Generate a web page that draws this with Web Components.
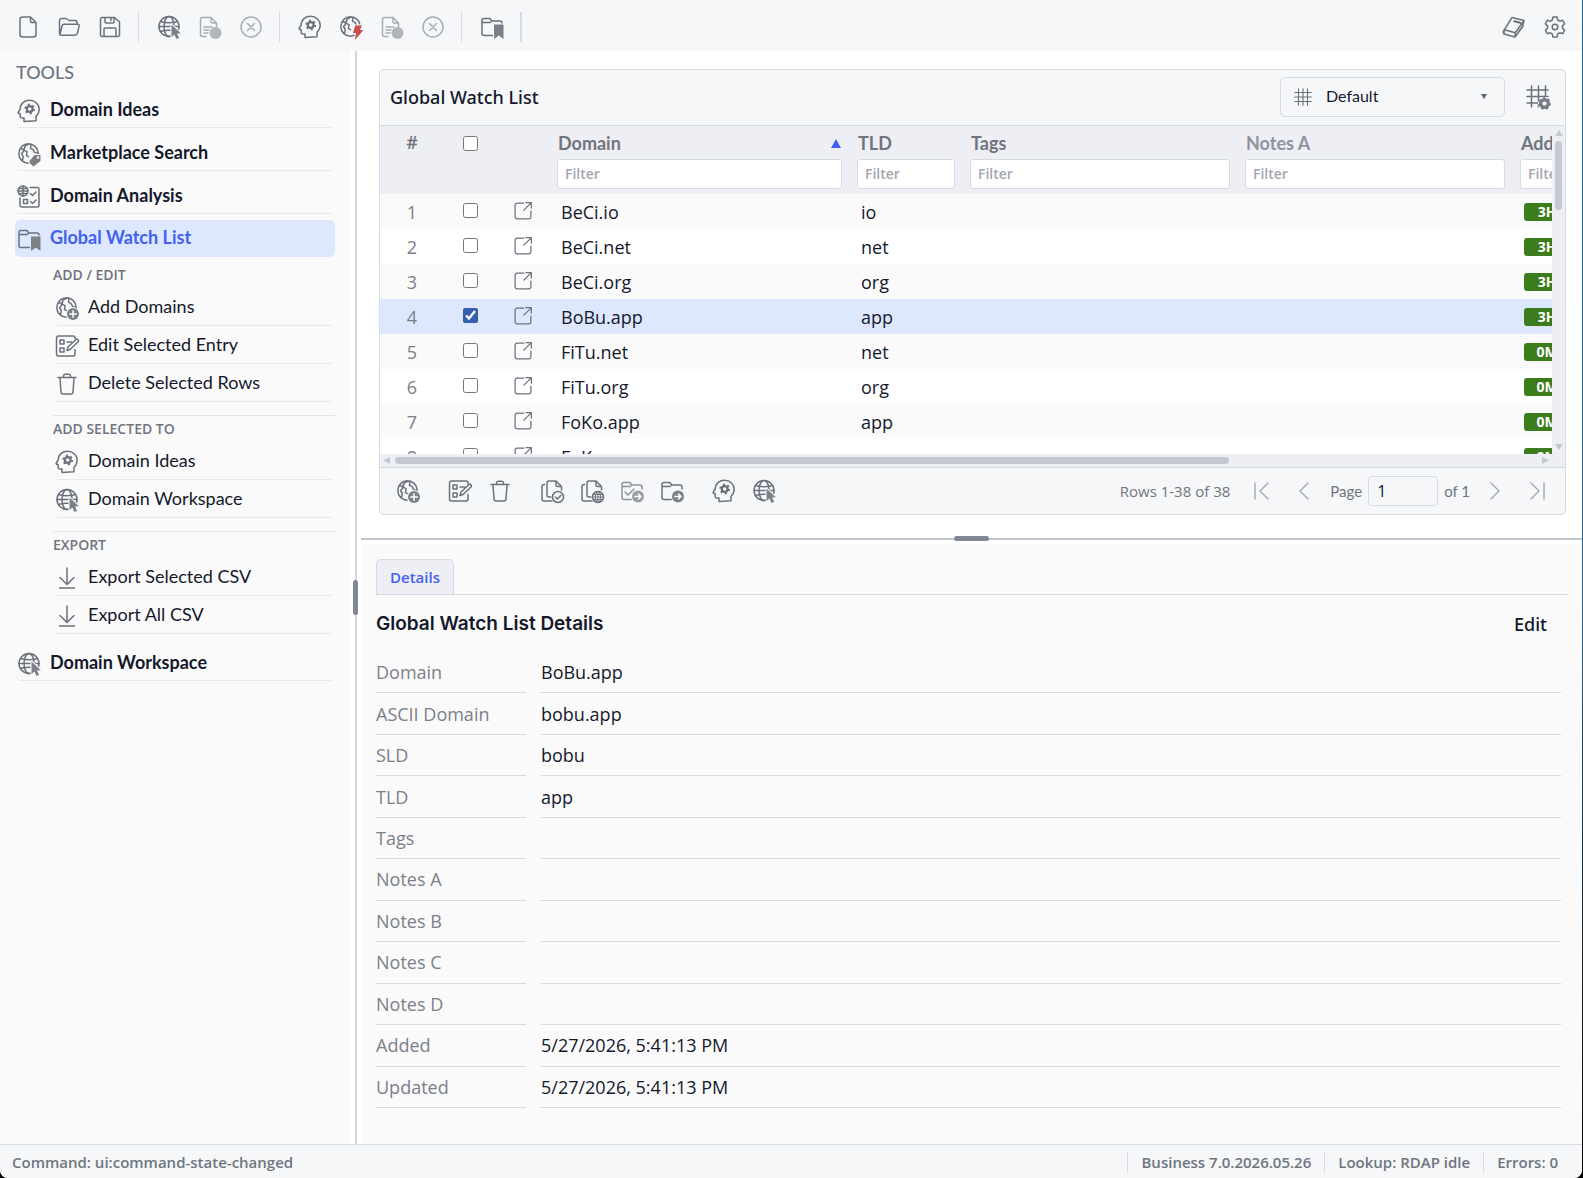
<!DOCTYPE html>
<html lang="en">
<head>
<meta charset="utf-8">
<title>Global Watch List</title>
<style>
  html, body { height: 100%; margin: 0; }
  body {
    background: linear-gradient(#1f5f8c, #2f5d80 50%, #111 90%, #000);
    --body-font: "Open Sans", "Noto Sans", sans-serif;
    --title-font: "Noto Sans", "Open Sans", sans-serif;
    --head-font: Lato, "Open Sans", sans-serif;
    font-family: var(--body-font);
    font-size: 18px;
    color: #14182b;
    --bar: #f5f7f9;
    --pane: #fafafa;
    --line: #d6dae3;
    --muted: #6f757f;
    --accent: #4361ee;
    --selected: #dde8fe;
    --icon-bg: #f5f7f9;
  }
</style>
</head>
<body>
<app-shell></app-shell>

<script>
const ICONS = {
  file: '<path d="M14.5 2h-8A2.5 2.5 0 0 0 4 4.500v15A2.500 2.500 0 0 0 6.500 22h11a2.500 2.500 0 0 0 2.500-2.500V7.500zM14.500 2v4A1.500 1.500 0 0 0 16 7.500h4"/>',
  open: '<path d="M2.500 18.500v-13A2 2 0 0 1 4.500 3.500h4.500l3 2h6a2 2 0 0 1 2 2v1.500M3 19.500l2-8.500a2 2 0 0 1 2-1.800h14a1.200 1.200 0 0 1 1.200 1.500l-1.700 7.500a2.500 2.500 0 0 1-2.300 2H4.500a2 2 0 0 1-2-2"/>',
  save: '<path d="M5 2.500h11.500L21.500 7v12.500a2 2 0 0 1-2 2h-15a2 2 0 0 1-2-2v-15a2 2 0 0 1 2-2M7 2.500v4.500a1 1 0 0 0 1 1h7a1 1 0 0 0 1-1V2.500M13 3v2.500M6 21.500V14a1 1 0 0 1 1-1h10a1 1 0 0 1 1 1v7.500"/>',
  globe: '<circle cx="12" cy="11.500" r="10"/><ellipse cx="12" cy="11.500" rx="5" ry="10"/><path d="M3.500 6.500q8.500 2.500 17 0M2 11.500h20M3.500 16.500q8.500-2.500 17 0"/><path class="solid cut" d="M14.500 9.500v12.500l2.900-2.400 2.100 4.400 2.600-1.200-2.100-4.200 3.800-.4z"/>',
  log: '<path d="M8 21.500H4.500A2 2 0 0 1 2.500 19.500v-15a2 2 0 0 1 2-2h8.500l5.500 5.500v4M13 2.500v4A1.500 1.500 0 0 0 14.500 8h4M6 12h8M6 15h5M6 18h4"/><circle class="solid" cx="17.500" cy="18" r="6"/>',
  cancel: '<circle cx="12" cy="12" r="10"/><path d="M8.500 8.500l7 7M15.500 8.500l-7 7"/>',
  head: '<path d="M7 22.500v-3.500H4.800a1.600 1.600 0 0 1-1.600-1.600V15L1.300 14q-.4-.5 0-1L3.200 10C3.200 4.500 7.500 1.300 12.700 1.300c5.500 0 9.500 4 9.500 9 0 3-1.200 5-3.200 7v4.500z"/><circle cx="12.700" cy="10" r="2.900" style="stroke-width:2.200"/><circle class="teeth" cx="12.700" cy="10" r="4.400"/>',
  bolt: '<circle cx="11.500" cy="11.500" r="9.700"/><path d="M3.500 7h2.700l.3 2.500-2 2L6 14v3l-1.500.8M12 2L8 4.200l-1 4 3 1.500-.5 4 2 1M14 2.400l-.5 4 2.500 1 1.500 3 3.500 1"/><path class="cut" fill="#c84f4f" d="M16.200 10.500h6.800l-2 4.500h3.500L16 25l1-7h-3z"/>',
  folder: '<path d="M13 20.500H4a2 2 0 0 1-2-2v-13A1.800 1.800 0 0 1 3.800 3.500h6l2 2.500H20a2 2 0 0 1 2 2v2M2.500 7.500h7.500L12 6"/>',
  book: '<path d="M10 2.500l12 3-1.500 6-7.500 10.500L2 19l.3-4.200zM2.300 14.800l11 3L22 5.500M13.300 17.800L13 22M2 19q-1.500-2 .3-4.200M15 19.200l6-8"/><path style="stroke-width:2.200" d="M12.300 6.300l6 1.500"/>',
  gear: '<path d="M10 2h4l.7 3 2 1.200 3-.9 2 3.500-2.300 2.100v2.200l2.300 2.100-2 3.500-3-.9-2 1.200-.7 3h-4l-.7-3-2-1.200-3 .9-2-3.500 2.300-2.100v-2.200L2.300 8.800l2-3.500 3 .9 2-1.200z"/><circle cx="12" cy="12" r="2.800"/>',
  tag: '<circle cx="11.500" cy="11.500" r="9.700"/><path d="M3.500 7h2.700l.3 2.500-2 2L6 14v3l-1.500.8M12 2L8 4.200l-1 4 3 1.500-.5 4 2 1M14 2.400l-.5 4 2.500 1 1.500 3 3.500 1"/><path class="solid cut" d="M12.500 19l5-6h6v6l-7 5.500-4-3.500z"/><circle cx="21" cy="15.500" r=".5" stroke="#fff"/>',
  analysis: '<circle cx="6" cy="6" r="5"/><path d="M1 6h10M6 1v10M2 3.500h8M2 8.500h8M13 2.500h7a2 2 0 0 1 2 2v15.500a2 2 0 0 1-2 2H5a2 2 0 0 1-2-2v-7M6.500 14.500h4v4h-4zM13.500 8.500l2 2L19 7M13.500 16.500l2 2L19 15"/>',
  add: '<circle cx="11.500" cy="11.500" r="9.700"/><path d="M3.500 7h2.700l.3 2.500-2 2L6 14v3l-1.500.8M12 2L8 4.200l-1 4 3 1.500-.5 4 2 1M14 2.400l-.5 4 2.500 1 1.500 3 3.500 1"/><circle class="solid cut" cx="18" cy="18" r="6"/><path stroke="#fff" d="M18 14.700v6.600M14.700 18h6.600"/>',
  edit: '<path d="M20 4.500V4a2 2 0 0 0-2-2H3.500a2 2 0 0 0-2 2v16a2 2 0 0 0 2 2H18a2 2 0 0 0 2-2v-4.500M5 6h4v4H5zM5 14h4v4H5zM12 8h4.500M12 16.500l1-3.500 8-7.500q1-.8 2 .2t.2 2L15 15.500z"/>',
  trash: '<path d="M3 5.500h18M8.500 5.500V4A1.800 1.800 0 0 1 10.300 2.200h3.400A1.800 1.800 0 0 1 15.500 4v1.500M5 6l1 14a2.200 2.200 0 0 0 2.200 2h7.600A2.200 2.200 0 0 0 18 20L19 6"/>',
  download: '<path d="M12 2v16M5 11.500l7 7 7-7M4.500 22h15"/>',
  grid: '<path d="M6 1v22M12 1v22M18 1v22M1 6h22M1 12h22M1 18h22"/>',
  columns: '<path d="M5.500 1v21M12.500 1v21M19.500 1v11M1 5h21M1 11.500h21M1 18h12"/><circle class="solid cut" cx="18.500" cy="18.500" r="5.500"/><circle cx="18.500" cy="18.500" r="3.300" stroke="#7c8087" style="stroke-width:2.400" fill="#f5f7f9"/><circle class="teeth" cx="18.500" cy="18.500" r="5.300"/>',
  external: '<path d="M13 2.500H5A2.500 2.500 0 0 0 2.500 5v14A2.500 2.500 0 0 0 5 21.500h14a2.500 2.500 0 0 0 2.500-2.500v-7M15.500 2h6.500v6.500M21.500 2.500L13 11"/>',
  copy: '<path d="M9 2h7l5.500 5.500V11M16 2v4a1.500 1.500 0 0 0 1.500 1.500h4M11 18H9A2 2 0 0 1 7 16V4a2 2 0 0 1 2-2M4.500 5.500A2 2 0 0 0 2 7.500V20a2 2 0 0 0 2 2h8"/><circle cx="18" cy="18" r="5.500"/>',
  first: '<path d="M5 4v16M18 4l-8 8 8 8"/>',
  prev: '<path d="M16 4l-8 8 8 8"/>',
  next: '<path d="M8 4l8 8-8 8"/>',
  last: '<path d="M19 4v16M6 4l8 8-8 8"/>'
};
ICONS.watch = ICONS.folder + '<path class="solid cut" d="M14 9.500h9.500V24l-4.700-3.500L14 24z"/>';
ICONS.move = ICONS.folder + '<circle class="solid cut" cx="18" cy="17.500" r="6"/><path stroke="#fff" d="M14.800 17.500h6M18.500 15l2.500 2.500-2.500 2.500"/>';
ICONS.moveChecked = '<path d="M5 13l3 3 6-6"/>' + ICONS.move;
ICONS.copyCheck = ICONS.copy + '<path d="M15.500 18l2 2 3.300-3.600"/>';
ICONS.copyGlobe = ICONS.copy + '<path style="stroke-width:1" d="M18 12.500v11M12.500 18h11M13.500 15.500h9M13.500 20.500h9"/><ellipse style="stroke-width:1" cx="18" cy="18" rx="2.600" ry="5.500"/>';

class UiIcon extends HTMLElement {
  connectedCallback() {
    this.attachShadow({ mode: 'open' });
    this.shadowRoot.innerHTML = `
      <style>
        :host { display: inline-flex; width: 24px; height: 24px; flex: none; color: #6b717c; }
        svg { width: 100%; height: 100%; fill: none; stroke: currentColor; stroke-width: 1.5;
          stroke-linecap: round; stroke-linejoin: round; overflow: visible; }
        .solid { fill: #7c8087; stroke: none; }
        .cut { stroke: var(--icon-bg); stroke-width: 2; paint-order: stroke; }
        .teeth { stroke-linecap: butt; stroke-width: 2; stroke-dasharray: 2 2.600; }
      </style>
      <svg viewBox="0 0 24 24" aria-hidden="true">${ICONS[this.getAttribute('name')]}</svg>
    `;
  }
}
customElements.define('ui-icon', UiIcon);

class IconButton extends HTMLElement {
  connectedCallback() {
    const off = this.hasAttribute('disabled');
    this.attachShadow({ mode: 'open' });
    this.shadowRoot.innerHTML = `
      <style>
        :host { display: inline-flex; }
        :host([disabled]) { opacity: .55; }
        button { display: flex; align-items: center; justify-content: center;
          width: var(--btn, 41px); height: 40px; padding: 0; border: 0; background: none; }
      </style>
      <button type="button" aria-label="${this.getAttribute('label')}" ${off ? 'disabled' : ''}>
        <ui-icon name="${this.getAttribute('icon')}"></ui-icon>
      </button>
    `;
  }
}
customElements.define('icon-button', IconButton);

class AppToolbar extends HTMLElement {
  connectedCallback() {
    this.attachShadow({ mode: 'open' });
    this.shadowRoot.innerHTML = `
      <style>
        :host { display: flex; align-items: center; height: 51px; padding: 2px 7px 0; box-sizing: border-box; background: var(--bar); }
        i { width: 1px; height: 30px; margin: 0 9px 0 8px; background: var(--line); }
        i.wide { width: 2px; }
        .space { flex: 1; }
      </style>
      <icon-button icon="file" label="New"></icon-button>
      <icon-button icon="open" label="Open"></icon-button>
      <icon-button icon="save" label="Save"></icon-button>
      <i></i>
      <icon-button icon="globe" label="Workspace"></icon-button>
      <icon-button icon="log" label="Lookup log" disabled></icon-button>
      <icon-button icon="cancel" label="Cancel lookup" disabled></icon-button>
      <i></i>
      <icon-button icon="head" label="Ideas"></icon-button>
      <icon-button icon="bolt" label="Quick check"></icon-button>
      <icon-button icon="log" label="Check log" disabled></icon-button>
      <icon-button icon="cancel" label="Cancel check" disabled></icon-button>
      <i></i>
      <icon-button icon="watch" label="Watch list"></icon-button>
      <i class="wide"></i>
      <span class="space"></span>
      <icon-button icon="book" label="Manual"></icon-button>
      <icon-button icon="gear" label="Settings"></icon-button>
    `;
  }
}
customElements.define('app-toolbar', AppToolbar);

class NavItem extends HTMLElement {
  connectedCallback() {
    this.attachShadow({ mode: 'open' });
    this.shadowRoot.innerHTML = `
      <style>
        :host { display: block; margin: 0 2px; --icon-bg: #fafafa; }
        a { display: flex; align-items: center; gap: 9px; height: 37px; box-sizing: border-box;
          border-bottom: 1px solid #e6e8ec; border-radius: 3px; color: inherit; text-decoration: none;
          font: 700 18px/24px var(--head-font); }
        ui-icon { margin-top: 4px; }
        :host([sub]) a { height: 33px; padding-bottom: 6px; font-weight: 400; }
        :host([active]) { margin: 0; --icon-bg: #dde8fe; color: var(--accent); }
        :host([active]) a { padding: 0 0 3px 2px; background: var(--selected); border: 0; border-radius: 5px; }
      </style>
      <a href="#"><ui-icon name="${this.getAttribute('icon')}"></ui-icon><slot></slot></a>
    `;
  }
}
customElements.define('nav-item', NavItem);

class NavSection extends HTMLElement {
  connectedCallback() {
    this.attachShadow({ mode: 'open' });
    this.shadowRoot.innerHTML = `
      <style>
        :host { display: flex; flex-direction: column; gap: 5px; margin-left: 38px; }
        :host([ruled]) { margin-top: 13px; border-top: 1px solid #e3e5ea; }
        h3 { margin: 0; font-size: 14px; line-height: 26px; font-weight: 600; color: var(--muted); }
      </style>
      <h3>${this.getAttribute('label')}</h3>
      <slot></slot>
    `;
  }
}
customElements.define('nav-section', NavSection);

class ToolNav extends HTMLElement {
  connectedCallback() {
    this.attachShadow({ mode: 'open' });
    this.shadowRoot.innerHTML = `
      <style>
        :host { display: block; width: 350px; flex: none; padding: 8px 15px; box-sizing: border-box; background: var(--pane); }
        h2 { margin: 0 1px 6px; font: 500 18px/26px var(--head-font); color: var(--muted); }
        nav { display: flex; flex-direction: column; gap: 6px; }
        .subs { margin: -1px 0 4px; }
      </style>
      <h2>TOOLS</h2>
      <nav>
        <nav-item icon="head">Domain Ideas</nav-item>
        <nav-item icon="tag">Marketplace Search</nav-item>
        <nav-item icon="analysis">Domain Analysis</nav-item>
        <nav-item icon="watch" active>Global Watch List</nav-item>
        <div class="subs">
          <nav-section label="ADD / EDIT">
            <nav-item sub icon="add">Add Domains</nav-item>
            <nav-item sub icon="edit">Edit Selected Entry</nav-item>
            <nav-item sub icon="trash">Delete Selected Rows</nav-item>
          </nav-section>
          <nav-section ruled label="ADD SELECTED TO">
            <nav-item sub icon="head">Domain Ideas</nav-item>
            <nav-item sub icon="globe">Domain Workspace</nav-item>
          </nav-section>
          <nav-section ruled label="EXPORT">
            <nav-item sub icon="download">Export Selected CSV</nav-item>
            <nav-item sub icon="download">Export All CSV</nav-item>
          </nav-section>
        </div>
        <nav-item icon="globe">Domain Workspace</nav-item>
      </nav>
    `;
  }
}
customElements.define('tool-nav', ToolNav);

class PaneSplitter extends HTMLElement {
  connectedCallback() {
    this.attachShadow({ mode: 'open' });
    this.shadowRoot.innerHTML = `
      <style>
        :host { display: flex; align-items: center; justify-content: center; flex: none; width: 11px; background:
          linear-gradient(#d3d7de, #d3d7de) center / 2px 100% no-repeat #fff; }
        :host([horizontal]) { width: auto; height: 11px; background:
          linear-gradient(#c1c6d1, #c1c6d1) center / 100% 2px no-repeat #fff; }
        span { width: 5px; height: 35px; border-radius: 3px; background: #828896; }
        :host([horizontal]) span { width: 35px; height: 5px; }
      </style>
      <span></span>
    `;
  }
}
customElements.define('pane-splitter', PaneSplitter);

class ScrollTrack extends HTMLElement {
  connectedCallback() {
    this.attachShadow({ mode: 'open' });
    this.shadowRoot.innerHTML = `
      <style>
        :host { display: flex; flex-direction: column; align-items: center; box-sizing: border-box;
          padding: 4px 0; background: #eeeff4; }
        :host([horizontal]) { flex-direction: row; padding: 0 3px; }
        svg { width: 8px; height: 7px; flex: none; fill: #c4c8d1; }
        .track { flex: 1; align-self: stretch; display: flex; flex-direction: inherit; align-items: center; margin: 4px 0; }
        .thumb { width: 7px; height: 23%; border-radius: 4px; background: #c4c8d1; }
        :host([horizontal]) .track { margin: 0 4px; }
        :host([horizontal]) .thumb { width: 73%; height: 7px; }
      </style>
      <svg viewBox="0 0 8 7"><path d="${this.hasAttribute('horizontal') ? 'M7 0v7L0 3.500z' : 'M0 6h8L4 0z'}"/></svg>
      <div class="track"><div class="thumb"></div></div>
      <svg viewBox="0 0 8 7"><path d="${this.hasAttribute('horizontal') ? 'M1 0v7l7-3.500z' : 'M0 1h8L4 7z'}"/></svg>
    `;
  }
}
customElements.define('scroll-track', ScrollTrack);

const ROWS = [
  ['BeCi.io', 'io', '3H'],
  ['BeCi.net', 'net', '3H'],
  ['BeCi.org', 'org', '3H'],
  ['BoBu.app', 'app', '3H'],
  ['FiTu.net', 'net', '0M'],
  ['FiTu.org', 'org', '0M'],
  ['FoKo.app', 'app', '0M'],
  ['FoKo.org', '', '0M']
];

class WatchTable extends HTMLElement {
  connectedCallback() {
    const heads = ['Domain', 'TLD', 'Tags', 'Notes A', 'Added'];
    const headCells = heads.map(name => `
      <th class="${name === 'Notes A' ? 'soft' : ''}">
        <div class="name">${name}${name === 'Domain' ? '<svg viewBox="0 0 10 9"><path d="M5 0l5 9H0z"/></svg>' : ''}</div>
        <input type="text" placeholder="Filter" aria-label="Filter ${name}">
      </th>`).join('');
    const rows = ROWS.map((r, i) => `
      <tr class="${i === 3 ? 'selected' : ''}">
        <td class="num">${i + 1}</td>
        <td class="mid"><input type="checkbox" aria-label="Select ${r[0]}" ${i === 3 ? 'checked' : ''}></td>
        <td class="mid"><ui-icon name="external"></ui-icon></td>
        <td>${r[0]}</td><td>${r[1]}</td><td></td><td></td>
        <td><span class="badge">${r[2]}</span></td>
      </tr>`).join('');
    this.attachShadow({ mode: 'open' });
    this.shadowRoot.innerHTML = `
      <style>
        :host { display: grid; grid-template: minmax(0, 1fr) 13px / minmax(0, 1fr) 13px; min-height: 0; background: #eeeff4; }
        .view { overflow: hidden; background: #fff; }
        table { width: 1308px; table-layout: fixed; border-collapse: collapse; }
        th { height: 68px; padding: 0 8px 0 7px; box-sizing: border-box; vertical-align: top; text-align: left;
          background: #eeeff4; color: var(--muted); font: 700 18px/24px var(--head-font); }
        th.mid, th.num { padding: 4px 0 0; text-align: center; }
        th.num { font-family: var(--body-font); font-weight: 600; }
        th.mid { padding-top: 3px; }
        th.soft { color: #8f939d; }
        .name { display: flex; align-items: center; justify-content: space-between; height: 24px; padding: 5px 1px 4px; }
        .name svg { width: 10px; height: 9px; fill: var(--accent); }
        th input[type=text] { display: block; width: 100%; height: 30px; box-sizing: border-box; margin: 0; padding: 0 7px 2px;
          border: 1px solid var(--line); border-radius: 3px; background: #fff; font: 600 14px/20px var(--body-font); }
        ::placeholder { color: #a3a7af; opacity: 1; }
        input[type=checkbox] { width: 15px; height: 15px; margin: 0; accent-color: #335fac; vertical-align: middle; }
        tr { height: 35px; }
        tbody tr:nth-child(odd) { background: #fafafa; }
        tbody tr.selected { background: var(--selected); }
        td { height: 35px; padding: 0 11px; box-sizing: border-box; line-height: 24px; white-space: nowrap; }
        td.num { padding: 0; text-align: center; color: #7b8089; }
        td.mid { padding: 0 1px 6px 0; text-align: center; }
        td ui-icon { width: 20px; height: 20px; vertical-align: middle; }
        .badge { display: block; width: 46px; border-radius: 3px; background: #3d7c1c; color: #fff;
          font-size: 14px; line-height: 18px; font-weight: 700; text-align: center; }
        scroll-track[horizontal] { grid-column: 1; }
      </style>
      <div class="view">
        <table>
          <colgroup><col style="width:64px"><col style="width:53px"><col style="width:53px"><col style="width:300px"><col style="width:113px"><col style="width:275px"><col style="width:275px"><col style="width:175px"></colgroup>
          <thead><tr><th class="num">#</th><th class="mid"><input type="checkbox" aria-label="Select all"></th><th></th>${headCells}</tr></thead>
          <tbody>${rows}</tbody>
        </table>
      </div>
      <scroll-track></scroll-track>
      <scroll-track horizontal></scroll-track>
    `;
  }
}
customElements.define('watch-table', WatchTable);

class WatchCard extends HTMLElement {
  connectedCallback() {
    this.attachShadow({ mode: 'open' });
    this.shadowRoot.innerHTML = `
      <style>
        :host { display: flex; flex-direction: column; height: 482px; flex: none; box-sizing: border-box; padding: 18px 16px 18px 18px; background: #fff; }
        section { display: flex; flex-direction: column; flex: 1; min-height: 0; border: 1px solid var(--line); border-radius: 5px;
          background: var(--bar); overflow: hidden; }
        header { display: flex; align-items: center; height: 56px; box-sizing: border-box; border-bottom: 1px solid var(--line);
          padding: 0 7px 2px 10px; }
        h1 { flex: 1; margin: 0; font: 500 18px/24px var(--title-font); }
        .layout { display: flex; align-items: center; width: 225px; height: 40px; box-sizing: border-box; margin-right: 12px;
          padding: 0 17px 0 13px; border: 1px solid var(--line); border-radius: 5px; }
        .layout ui-icon { width: 18px; height: 18px; }
        select { flex: 1; height: 38px; margin: 0 0 0 10px; padding: 0 4px 2px; appearance: none; border: 0; background: none;
          font: 16px/24px var(--head-font); color: inherit; }
        .layout svg { width: 6px; height: 5px; fill: #5f6570; }
        watch-table { flex: 1; }
        footer { display: flex; align-items: center; height: 47px; padding: 0 7px 0 8px; box-sizing: border-box;
          border-top: 1px solid var(--line); --btn: 40px; color: var(--muted); font-size: 15px; }
        .group { display: flex; margin-right: 12px; }
        .space { flex: 1; }
        .pager { display: flex; align-items: center; --btn: 42px; }
        .rows { margin-right: 11px; }
        .page { display: flex; align-items: center; gap: 6px; padding: 0 4px 0 5px; font: 15px/24px var(--head-font); }
        .page input { width: 70px; height: 30px; box-sizing: border-box; margin: 0; padding: 0 8px; border: 1px solid var(--line);
          border-radius: 4px; background: var(--bar); color: #14182b; font: 16px/24px var(--body-font); }
      </style>
      <section>
        <header>
          <h1>Global Watch List</h1>
          <label class="layout">
            <ui-icon name="grid"></ui-icon>
            <select aria-label="Column layout"><option>Default</option></select>
            <svg viewBox="0 0 6 5"><path d="M0 0h6L3 5z"/></svg>
          </label>
          <icon-button icon="columns" label="Columns"></icon-button>
        </header>
        <watch-table></watch-table>
        <footer>
          <span class="group"><icon-button icon="add" label="Add"></icon-button></span>
          <span class="group">
            <icon-button icon="edit" label="Edit entry"></icon-button>
            <icon-button icon="trash" label="Delete"></icon-button>
          </span>
          <span class="group">
            <icon-button icon="copyCheck" label="Copy selected"></icon-button>
            <icon-button icon="copyGlobe" label="Copy domains"></icon-button>
            <icon-button icon="moveChecked" label="Move selected" style="opacity:.75"></icon-button>
            <icon-button icon="move" label="Move"></icon-button>
          </span>
          <span class="group">
            <icon-button icon="head" label="Send to ideas"></icon-button>
            <icon-button icon="globe" label="Send to workspace"></icon-button>
          </span>
          <span class="space"></span>
          <span class="pager">
            <span class="rows">Rows 1-38 of 38</span>
            <icon-button icon="first" label="First page" disabled></icon-button>
            <icon-button icon="prev" label="Previous page" disabled></icon-button>
            <label class="page">Page <input type="text" value="1"> of 1</label>
            <icon-button icon="next" label="Next page" disabled></icon-button>
            <icon-button icon="last" label="Last page" disabled></icon-button>
          </span>
        </footer>
      </section>
    `;
  }
}
customElements.define('watch-card', WatchCard);

const DETAILS = [
  ['Domain', 'BoBu.app'],
  ['ASCII Domain', 'bobu.app'],
  ['SLD', 'bobu'],
  ['TLD', 'app'],
  ['Tags', ''],
  ['Notes A', ''],
  ['Notes B', ''],
  ['Notes C', ''],
  ['Notes D', ''],
  ['Added', '5/27/2026, 5:41:13 PM'],
  ['Updated', '5/27/2026, 5:41:13 PM']
];

class DetailPane extends HTMLElement {
  connectedCallback() {
    this.attachShadow({ mode: 'open' });
    this.shadowRoot.innerHTML = `
      <style>
        :host { display: flex; flex-direction: column; flex: 1; min-height: 0; padding: 15px 14px 36px 15px; background: var(--pane); }
        .tabs { display: flex; border-bottom: 1px solid var(--line); }
        .tabs button { height: 35px; padding: 0 13px; border: 1px solid var(--line); border-bottom: 0; border-radius: 5px 5px 0 0;
          background: #eeeff4; color: var(--accent); font: 600 15px/24px var(--body-font); }
        header { display: flex; align-items: center; justify-content: space-between; height: 57px; }
        h2 { margin: 0; font: 600 19px/24px Inter, sans-serif; }
        header button { padding: 0 21px; border: 0; background: none; color: inherit; font: 500 18px/24px var(--title-font); }
        dl { display: grid; grid-template-columns: 150px 1fr; grid-auto-rows: 1fr; column-gap: 15px; flex: 1; margin: 0 7px 0 0; }
        dt, dd { display: flex; align-items: center; margin: 0; border-bottom: 1px solid var(--line); }
        dt { color: #7b8089; }
      </style>
      <div class="tabs" role="tablist"><button type="button" role="tab">Details</button></div>
      <header><h2>Global Watch List Details</h2><button type="button">Edit</button></header>
      <dl>${DETAILS.map(([k, v]) => `<dt>${k}</dt><dd>${v}</dd>`).join('')}</dl>
    `;
  }
}
customElements.define('detail-pane', DetailPane);

class StatusBar extends HTMLElement {
  connectedCallback() {
    this.attachShadow({ mode: 'open' });
    this.shadowRoot.innerHTML = `
      <style>
        :host { display: flex; align-items: center; height: 34px; box-sizing: border-box; padding: 1px 24px 0 12px;
          border-top: 1px solid var(--line); background: var(--bar); color: var(--muted); font-size: 15px; line-height: 20px; font-weight: 600; }
        .msg { flex: 1; }
        .cell { border-left: 1px solid var(--line); margin-left: 13px; padding-left: 13px; }
      </style>
      <span class="msg">Command: ui:command-state-changed</span>
      <span class="cell">Business 7.0.2026.05.26</span>
      <span class="cell">Lookup: RDAP idle</span>
      <span class="cell">Errors: 0</span>
    `;
  }
}
customElements.define('status-bar', StatusBar);

class AppShell extends HTMLElement {
  connectedCallback() {
    this.attachShadow({ mode: 'open' });
    this.shadowRoot.innerHTML = `
      <style>
        :host { display: flex; flex-direction: column; height: 100vh; margin-right: 1px; overflow: hidden; border-radius: 0 0 8px 8px; background: #fff; }
        .body { display: flex; flex: 1; min-height: 0; }
        main { display: flex; flex-direction: column; flex: 1; min-width: 0; }
      </style>
      <app-toolbar></app-toolbar>
      <div class="body">
        <tool-nav></tool-nav>
        <pane-splitter></pane-splitter>
        <main>
          <watch-card></watch-card>
          <pane-splitter horizontal></pane-splitter>
          <detail-pane></detail-pane>
        </main>
      </div>
      <status-bar></status-bar>
    `;
  }
}
customElements.define('app-shell', AppShell);
</script>
</body>
</html>
